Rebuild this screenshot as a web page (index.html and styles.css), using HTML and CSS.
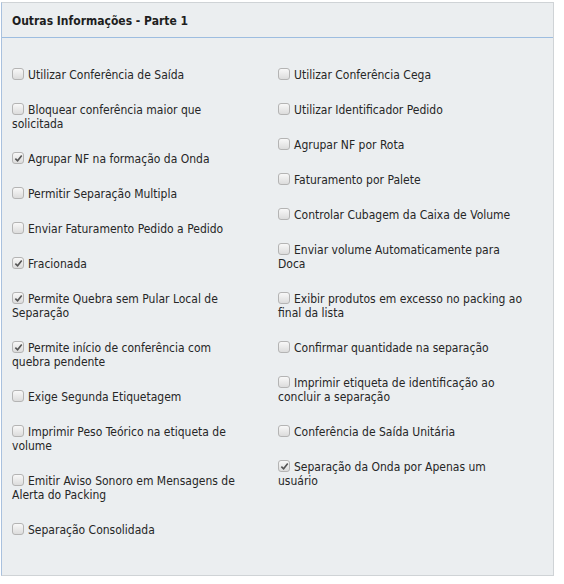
FILE: index.html
```html
<!DOCTYPE html>
<html lang="pt-BR">
<head>
    <meta charset="UTF-8">
    <title>Outras Informações - Parte 1</title>
    <link rel="stylesheet" href="styles.css">
</head>
<body>
    <div class="panel">
        <div class="panel-header">Outras Informações - Parte 1</div>

        <div class="panel-body">
            <div class="col">
                <label class="opt"><input type="checkbox" disabled>Utilizar Conferência de Saída</label>
                <label class="opt"><input type="checkbox" disabled>Bloquear conferência maior que solicitada</label>
                <label class="opt"><input type="checkbox" disabled checked>Agrupar NF na formação da Onda</label>
                <label class="opt"><input type="checkbox" disabled>Permitir Separação Multipla</label>
                <label class="opt"><input type="checkbox" disabled>Enviar Faturamento Pedido a Pedido</label>
                <label class="opt"><input type="checkbox" disabled checked>Fracionada</label>
                <label class="opt"><input type="checkbox" disabled checked>Permite Quebra sem Pular Local de Separação</label>
                <label class="opt"><input type="checkbox" disabled checked>Permite início de conferência com quebra pendente</label>
                <label class="opt"><input type="checkbox" disabled>Exige Segunda Etiquetagem</label>
                <label class="opt"><input type="checkbox" disabled>Imprimir Peso Teórico na etiqueta de volume</label>
                <label class="opt"><input type="checkbox" disabled>Emitir Aviso Sonoro em Mensagens de Alerta do Packing</label>
                <label class="opt"><input type="checkbox" disabled>Separação Consolidada</label>
            </div>
            <div class="col">
                <label class="opt"><input type="checkbox" disabled>Utilizar Conferência Cega</label>
                <label class="opt"><input type="checkbox" disabled>Utilizar Identificador Pedido</label>
                <label class="opt"><input type="checkbox" disabled>Agrupar NF por Rota</label>
                <label class="opt"><input type="checkbox" disabled>Faturamento por Palete</label>
                <label class="opt"><input type="checkbox" disabled>Controlar Cubagem da Caixa de Volume</label>
                <label class="opt"><input type="checkbox" disabled>Enviar volume Automaticamente para Doca</label>
                <label class="opt"><input type="checkbox" disabled>Exibir produtos em excesso no packing ao final da lista</label>
                <label class="opt"><input type="checkbox" disabled>Confirmar quantidade na separação</label>
                <label class="opt"><input type="checkbox" disabled>Imprimir etiqueta de identificação ao concluir a separação</label>
                <label class="opt"><input type="checkbox" disabled>Conferência de Saída Unitária</label>
                <label class="opt"><input type="checkbox" disabled checked>Separação da Onda por Apenas um usuário</label>
            </div>
        </div>
    </div>
</body>
</html>
```

FILE: styles.css
```css
* { margin: 0; padding: 0; box-sizing: border-box; }

body {
    font-family: "DejaVu Sans Condensed", "DejaVu Sans", sans-serif;
    font-size: 12px;
    color: #262626;
    background: #fff;
    padding: 2px 10px 0 1px;
}

.panel {
    width: 553px;
    height: 574px;
    background: #ebeef0;
    border: 1px solid #cfd3d6;
    border-left-color: #a9c1de;
}

.panel-header {
    height: 35px;
    padding: 11px 10px 0;
    font-weight: bold;
    color: #1e1e1e;
    border-bottom: 1px solid #9dbde0;
}

.panel-body {
    display: grid;
    grid-template-columns: 240px 248px;
    column-gap: 26px;
    padding: 30px 0 0 10px;
}

.col {
    display: flex;
    flex-direction: column;
    gap: 21px;
}

.opt {
    display: block;
    line-height: 14px;
}

.opt input {
    appearance: none;
    width: 12px;
    height: 12px;
    margin: 0 4px 0 0;
    vertical-align: -1px;
    border: 1px solid #b4b4b4;
    border-radius: 3px;
    background: linear-gradient(#f8f8f8, #dcdcdc);
}

.opt input:checked {
    background: url("data:image/svg+xml,%3Csvg xmlns='http://www.w3.org/2000/svg' viewBox='0 0 10 10'%3E%3Cpath d='M1.5 5.2 L4 7.6 L8.6 1.8' fill='none' stroke='%23555' stroke-width='1.8'/%3E%3C/svg%3E") center / 9px 9px no-repeat, linear-gradient(#f8f8f8, #dcdcdc);
}
```
